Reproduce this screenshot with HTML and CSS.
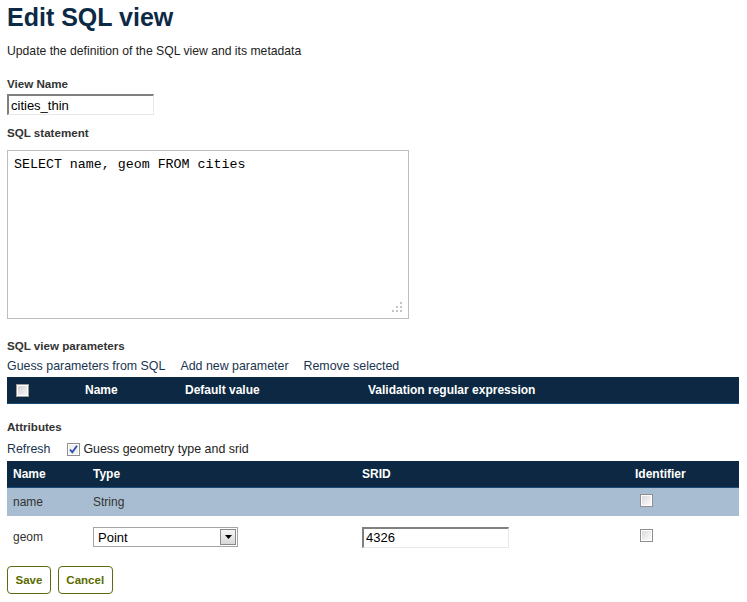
FILE: index.html
```html
<!DOCTYPE html>
<html>
<head>
<meta charset="utf-8">
<title>Edit SQL view</title>
<link rel="stylesheet" href="styles.css">
</head>
<body>
<div class="page">
  <h1 class="title">Edit SQL view</h1>
  <p class="subtitle">Update the definition of the SQL view and its metadata</p>

  <div class="label l-name">View Name</div>
  <input class="text name-input" type="text" value="cities_thin">

  <div class="label l-sql">SQL statement</div>
  <div class="sqlbox">
    <textarea class="sql" spellcheck="false">SELECT name, geom FROM cities</textarea>
    <svg class="grip" width="10" height="10" viewBox="0 0 10 10">
      <g fill="#c4c4c4">
        <rect x="8" y="0" width="2" height="2"/>
        <rect x="4" y="4" width="2" height="2"/><rect x="8" y="4" width="2" height="2"/>
        <rect x="0" y="8" width="2" height="2"/><rect x="4" y="8" width="2" height="2"/><rect x="8" y="8" width="2" height="2"/>
      </g>
    </svg>
  </div>

  <div class="label l-params">SQL view parameters</div>
  <div class="links">
    <a class="link">Guess parameters from SQL</a>
    <a class="link">Add new parameter</a>
    <a class="link">Remove selected</a>
  </div>
  <div class="thead params-head">
    <div class="pc pc-check"><span class="cb"></span></div>
    <div class="pc pc-name">Name</div>
    <div class="pc pc-def">Default value</div>
    <div class="pc pc-val">Validation regular expression</div>
  </div>

  <div class="label l-attr">Attributes</div>
  <div class="attr-tools">
    <a class="link">Refresh</a>
    <span class="cb checked">
      <svg width="11" height="11" viewBox="0 0 11 11"><path d="M2 5.5 L4.3 8.3 L9 1.8" fill="none" stroke="#2a4fb0" stroke-width="1.8"/></svg>
    </span>
    <span class="cb-label">Guess geometry type and srid</span>
  </div>

  <div class="attr-table">
    <div class="thead arow">
      <div class="ac ac-name">Name</div>
      <div class="ac ac-type">Type</div>
      <div class="ac ac-srid">SRID</div>
      <div class="ac ac-id">Identifier</div>
    </div>
    <div class="arow row-alt">
      <div class="ac ac-name">name</div>
      <div class="ac ac-type">String</div>
      <div class="ac ac-srid"></div>
      <div class="ac ac-id"><span class="cb cb-id"></span></div>
    </div>
    <div class="arow row-geom">
      <div class="ac ac-name">geom</div>
      <div class="ac ac-type">
        <div class="select"><span class="sel-text">Point</span><span class="sel-btn"><svg width="7" height="4" viewBox="0 0 7 4"><path d="M0 0 H7 L3.5 4 Z" fill="#000"/></svg></span></div>
      </div>
      <div class="ac ac-srid"><input class="text srid-input" type="text" value="4326"></div>
      <div class="ac ac-id"><span class="cb cb-id"></span></div>
    </div>
  </div>

  <div class="buttons">
    <button class="btn">Save</button>
    <button class="btn">Cancel</button>
  </div>
</div>
</body>
</html>
```
FILE: styles.css
```css
html, body {
  margin: 0;
  padding: 0;
  background: #fff;
}
.page {
  padding: 0 8px 0 7px;
  font-family: "Liberation Sans", Arial, sans-serif;
  font-size: 12px;
  color: #333;
}
.title {
  margin: 3px 0 0 0;
  font-size: 25px;
  line-height: 29px;
  font-weight: bold;
  color: #0c2a45;
}
.subtitle {
  margin: 11px 0 0 0;
  font-size: 12.2px;
  line-height: 16px;
  color: #222;
}
.label {
  font-weight: bold;
  font-size: 11.6px;
  line-height: 14px;
  color: #333;
}
.l-name { margin-top: 18px; }
.l-sql { margin-top: 11px; }
.l-params { margin-top: 20px; }
.l-attr { margin-top: 16px; }

.text {
  display: block;
  box-sizing: border-box;
  font-family: "Liberation Sans", Arial, sans-serif;
  font-size: 13px;
  color: #000;
  padding: 0 2px;
  border-style: solid;
  border-width: 2px 1px 1px 2px;
  border-color: #808080 #e8e8e8 #e8e8e8 #808080;
  background: #fff;
  outline: none;
}
.name-input {
  margin-top: 3px;
  width: 147px;
  height: 21px;
}
.sqlbox {
  position: relative;
  margin-top: 10px;
  width: 402px;
  height: 169px;
}
.sql {
  display: block;
  box-sizing: border-box;
  width: 402px;
  height: 169px;
  margin: 0;
  padding: 6px 6px;
  border: 1px solid #bdbdbd;
  resize: none;
  font-family: "Liberation Mono", "Courier New", monospace;
  font-size: 13.3px;
  line-height: 16px;
  color: #000;
  outline: none;
}
.grip {
  position: absolute;
  right: 7px;
  bottom: 7px;
}
.links {
  display: flex;
  gap: 15px;
  margin-top: 5px;
  line-height: 16px;
  font-size: 12.4px;
}
.link {
  color: #1a3550;
  text-decoration: none;
  cursor: pointer;
  font-size: 12.4px;
}
.thead {
  background: #0c2842;
  color: #fff;
  font-weight: bold;
  font-size: 12px;
}
.params-head {
  display: flex;
  align-items: center;
  height: 26px;
  margin-top: 3px;
  border-bottom: 1px solid #1c4a78;
}
.pc-check { width: 78px; padding-left: 9px; box-sizing: border-box; display: flex; }
.pc-name { width: 100px; }
.pc-def { width: 183px; }

.cb {
  display: inline-flex;
  align-items: center;
  justify-content: center;
  box-sizing: border-box;
  width: 13px;
  height: 13px;
  border: 1px solid #8f8f8f;
  background: linear-gradient(135deg, #d6d6d6 0%, #f4f4f4 70%, #ffffff 100%);
  box-shadow: inset 1px 1px 0 #fff, inset -1px -1px 0 #fff;
}
.params-head .cb {
  border-color: #9a9a9a;
  background: linear-gradient(135deg, #cfcfcf, #f8f8f8);
}
.attr-tools {
  display: flex;
  align-items: center;
  margin-top: 7px;
  height: 16px;
  line-height: 16px;
  font-size: 12.4px;
}
.attr-tools .link { margin-right: 17px; }
.cb.checked { margin-right: 3px; background: #f0f0f0; }
.cb-label { color: #222; }

.attr-table {
  margin-top: 4px;
}
.arow {
  display: flex;
  align-items: center;
}
.arow.thead {
  height: 26px;
  border-bottom: 1px solid #1c4a78;
}
.row-alt {
  height: 28px;
  background: #a8bdd1;
}
.row-geom {
  height: 42px;
}
.ac-name { width: 86px; padding-left: 6px; box-sizing: border-box; }
.ac-type { width: 269px; }
.ac-srid { width: 273px; }
.ac-id { padding-left: 0; }
.row-alt .ac-id, .row-geom .ac-id { padding-left: 5px; }

.select {
  display: flex;
  box-sizing: border-box;
  width: 145px;
  height: 20px;
  border: 1px solid #a5a5a5;
  background: #fff;
  align-items: center;
  padding: 1px;
}
.sel-text {
  flex: 1;
  font-size: 13px;
  color: #000;
  padding-left: 3px;
}
.sel-btn {
  display: flex;
  align-items: center;
  justify-content: center;
  box-sizing: border-box;
  width: 16px;
  height: 16px;
  border: 1px solid #8a8a8a;
  background: linear-gradient(#f5f5f5, #d8d8d8);
}
.srid-input {
  width: 147px;
  height: 21px;
}
.buttons {
  display: flex;
  gap: 7px;
  margin-top: 8px;
}
.btn {
  box-sizing: border-box;
  height: 28px;
  padding: 0 7.5px;
  border: 1px solid #5c6b10;
  border-radius: 4px;
  background: #fff;
  color: #5a6a00;
  font-family: "Liberation Sans", Arial, sans-serif;
  font-weight: bold;
  font-size: 11.5px;
}
```
